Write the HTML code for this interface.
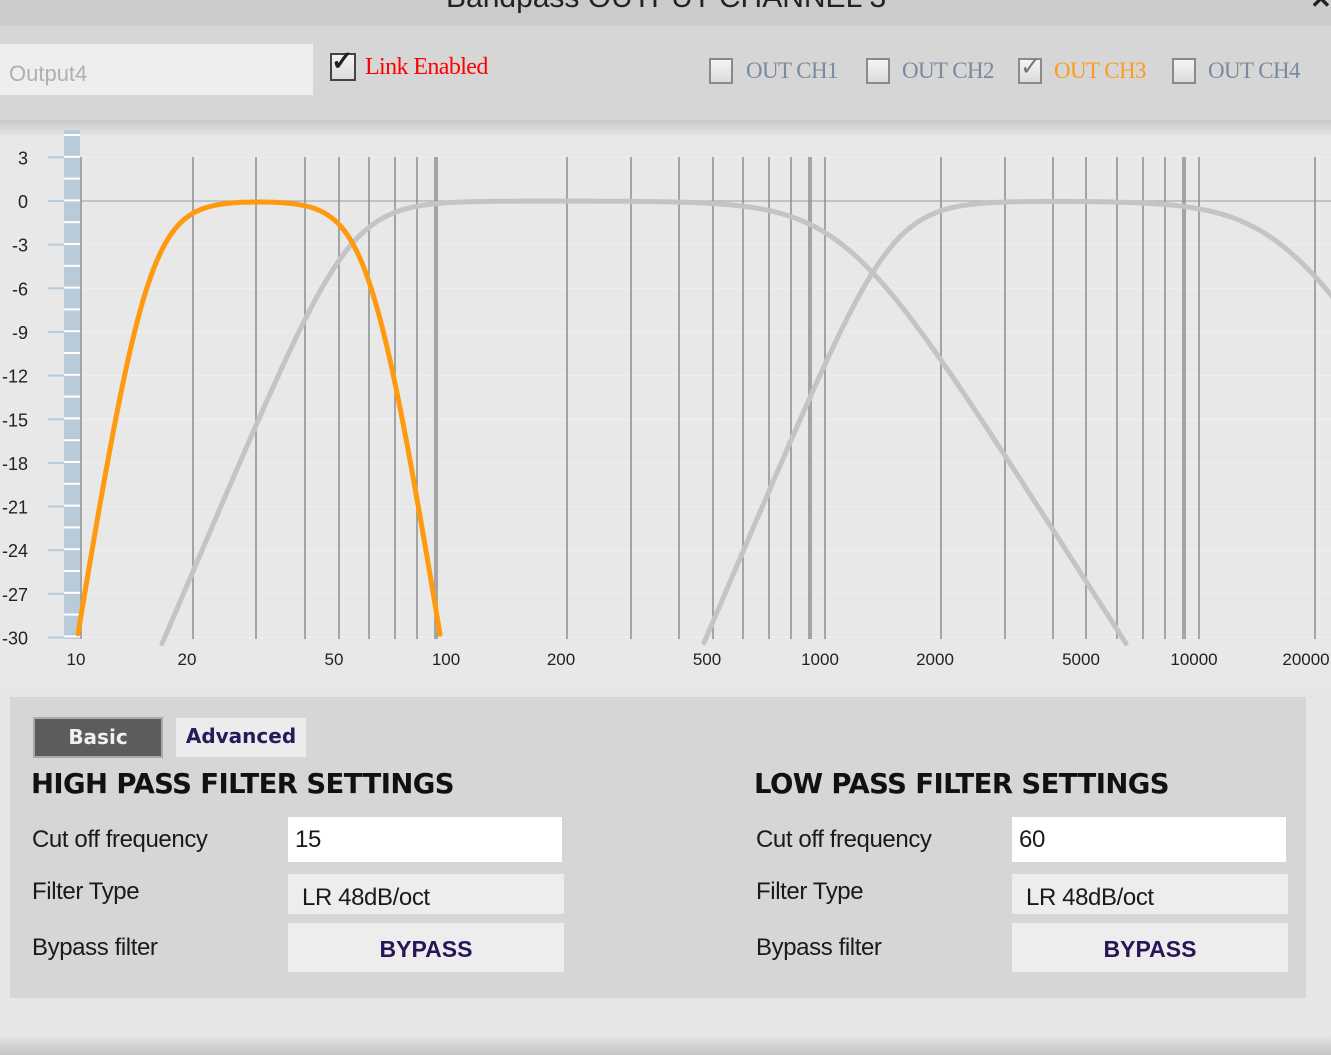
<!DOCTYPE html>
<html><head><meta charset="utf-8"><style>
*{margin:0;padding:0;box-sizing:border-box}
body{width:1331px;height:1055px;overflow:hidden;background:#e6e6e6;position:relative;font-family:"Liberation Sans",sans-serif}
.abs{position:absolute}
.cb{position:absolute;width:24px;height:26px;border:2px solid #8a8a8a;background:linear-gradient(#f4f4f4,#dcdcdc)}
.ser{font-family:"Liberation Serif",serif;font-size:23px;color:#7a8aa0;position:absolute;letter-spacing:-0.6px}
.lbl{position:absolute;font-size:24px;color:#1a1a1a;letter-spacing:-0.4px}
.h{position:absolute;font-family:"DejaVu Sans",sans-serif;font-weight:bold;font-size:27.5px;color:#111;letter-spacing:-0.6px}
.box{position:absolute;background:#ededed}
</style></head><body>
<div class="abs" style="left:0;top:0;width:1331px;height:26px;background:#cbcbcb;overflow:hidden">
 <div class="abs" style="left:446px;top:-19px;font-size:30px;color:#222;white-space:nowrap">Bandpass OUTPUT CHANNEL 3</div>
 <div class="abs" style="left:1310px;top:-16px;font-size:26px;color:#222;font-weight:bold">✕</div>
</div>
<div class="abs" style="left:0;top:26px;width:1331px;height:98px;background:#d6d6d6"></div>
<div class="abs" style="left:0;top:120px;width:1331px;height:18px;background:linear-gradient(#c8c8c8,#e8e8e8)"></div>
<div class="box" style="left:0;top:44px;width:313px;height:51px;background:#eeeeee"></div>
<div class="abs" style="left:9px;top:61px;font-size:22px;color:#b0b0b0">Output4</div>
<div class="cb" style="left:330px;top:53px;border-color:#444;width:26px;height:28px"></div>
<div class="abs" style="left:331px;top:46px;font-size:27px;color:#222;font-weight:bold">✓</div>
<div class="ser" style="left:365px;top:54px;color:#ff0000;font-size:24px">Link Enabled</div>
<div class="cb" style="left:709px;top:58px"></div><div class="ser" style="left:746px;top:58px">OUT CH1</div>
<div class="cb" style="left:866px;top:58px"></div><div class="ser" style="left:902px;top:58px">OUT CH2</div>
<div class="cb" style="left:1018px;top:58px"></div><div class="abs" style="left:1020px;top:52px;font-size:25px;color:#777">✓</div><div class="ser" style="left:1054px;top:58px;color:#ff9a1a">OUT CH3</div>
<div class="cb" style="left:1172px;top:58px"></div><div class="ser" style="left:1208px;top:58px">OUT CH4</div>

<svg class="abs" style="left:0;top:0" width="1331" height="690" id="g">
</svg>

<div class="abs" style="left:10px;top:697px;width:1296px;height:301px;background:#d6d6d6"></div>
<div class="abs" style="left:33px;top:717px;width:130px;height:41px;background:#5c5c5c;border:2px solid #aaa;color:#f0f0f0;font-family:'DejaVu Sans',sans-serif;font-weight:bold;font-size:20px;text-align:center;line-height:36px">Basic</div>
<div class="abs" style="left:176px;top:718px;width:130px;height:39px;background:#ececec;color:#2a1a5a;font-family:'DejaVu Sans',sans-serif;font-weight:bold;font-size:20px;text-align:center;line-height:36px">Advanced</div>
<div class="h" style="left:31px;top:768px">HIGH PASS FILTER SETTINGS</div>
<div class="h" style="left:754px;top:768px">LOW PASS FILTER SETTINGS</div>
<div class="lbl" style="left:32px;top:826px">Cut off frequency</div>
<div class="lbl" style="left:32px;top:878px">Filter Type</div>
<div class="lbl" style="left:32px;top:934px">Bypass filter</div>
<div class="lbl" style="left:756px;top:826px">Cut off frequency</div>
<div class="lbl" style="left:756px;top:878px">Filter Type</div>
<div class="lbl" style="left:756px;top:934px">Bypass filter</div>
<div class="box" style="left:288px;top:817px;width:274px;height:45px;background:#fff"></div><div class="lbl" style="left:295px;top:826px">15</div>
<div class="box" style="left:1012px;top:817px;width:274px;height:45px;background:#fff"></div><div class="lbl" style="left:1019px;top:826px">60</div>
<div class="box" style="left:288px;top:874px;width:276px;height:40px"></div><div class="lbl" style="left:302px;top:884px">LR 48dB/oct</div>
<div class="box" style="left:1012px;top:874px;width:276px;height:40px"></div><div class="lbl" style="left:1026px;top:884px">LR 48dB/oct</div>
<div class="box" style="left:288px;top:923px;width:276px;height:49px;text-align:center;font-weight:bold;font-size:23px;color:#2a1458;line-height:52px">BYPASS</div>
<div class="box" style="left:1012px;top:923px;width:276px;height:49px;text-align:center;font-weight:bold;font-size:23px;color:#2a1458;line-height:52px">BYPASS</div>
<div class="abs" style="left:0;top:1035px;width:1331px;height:20px;background:linear-gradient(#e6e6e6,#c4c4c4)"></div>
<script>
var s='',Y=function(d){return 201-d*14.55};
s+='<rect x="0" y="135" width="1331" height="555" fill="#e8e8e8"/>';
for(var d=3;d>=-30;d-=3){var y=Y(d);s+='<line x1="48" x2="64" y1="'+y+'" y2="'+y+'" stroke="#b9cad9" stroke-width="2"/>';
s+='<line x1="81" x2="1331" y1="'+y+'" y2="'+y+'" stroke="'+(d==0?'#a8b8c8':'#efefef')+'" stroke-width="'+(d==0?1.5:1)+'"/>';
s+='<text x="28" y="'+(y+7)+'" text-anchor="end" font-family="Liberation Sans" font-size="18" fill="#222">'+d+'</text>';}
s+='<rect x="64" y="130" width="16" height="509" fill="#b9cad9"/>';
for(var y=135;y<639;y+=21.8)s+='<line x1="64" x2="80" y1="'+y+'" y2="'+y+'" stroke="#fff" stroke-width="2"/>';
[81,193,256,305,339,369,395,417,435,437,567,631,679,713,743,769,791,809,811,825,941,1005,1053,1086,1117,1143,1165,1183,1185,1199,1315].forEach(function(x){s+='<line x1="'+x+'" x2="'+x+'" y1="157" y2="639" stroke="#8e8e8e" stroke-width="1.5"/>';});
[[10,76],[20,187],[50,334],[100,446],[200,561],[500,707],[1000,820],[2000,935],[5000,1081],[10000,1194],[20000,1306]].forEach(function(a){s+='<text x="'+a[1]+'" y="665" text-anchor="middle" font-family="Liberation Sans" font-size="17" fill="#222">'+a[0]+'</text>';});
function curve(fn,col,w){var p='',st=false;for(var x=60;x<=1335;x+=2){var f=10*Math.pow(10,(x-81)/373),d=fn(f);if(d<-30.5){if(st)break;continue;}p+=(st?'L':'M')+x+' '+Y(d).toFixed(1);st=true;}return '<path d="'+p+'" fill="none" stroke="'+col+'" stroke-width="'+w+'" stroke-linecap="round"/>';}
function hp(fc,n){return function(f){return -10*Math.log10(1+Math.pow(fc/f,2*n));}}
function lp(fc,n){return function(f){return -10*Math.log10(1+Math.pow(f/fc,2*n));}}
s+=curve(function(f){return hp(53,3)(f)+lp(1100,2)(f)},'#c4c4c4',5);
s+=curve(function(f){return hp(1500,3)(f)+lp(16500,2)(f)},'#c4c4c4',5);
s+=curve(function(f){return 2*hp(15,4)(f)+2*lp(60,4)(f)},'#ff9a10',5);
document.getElementById('g').innerHTML=s;
</script>
</body></html>
